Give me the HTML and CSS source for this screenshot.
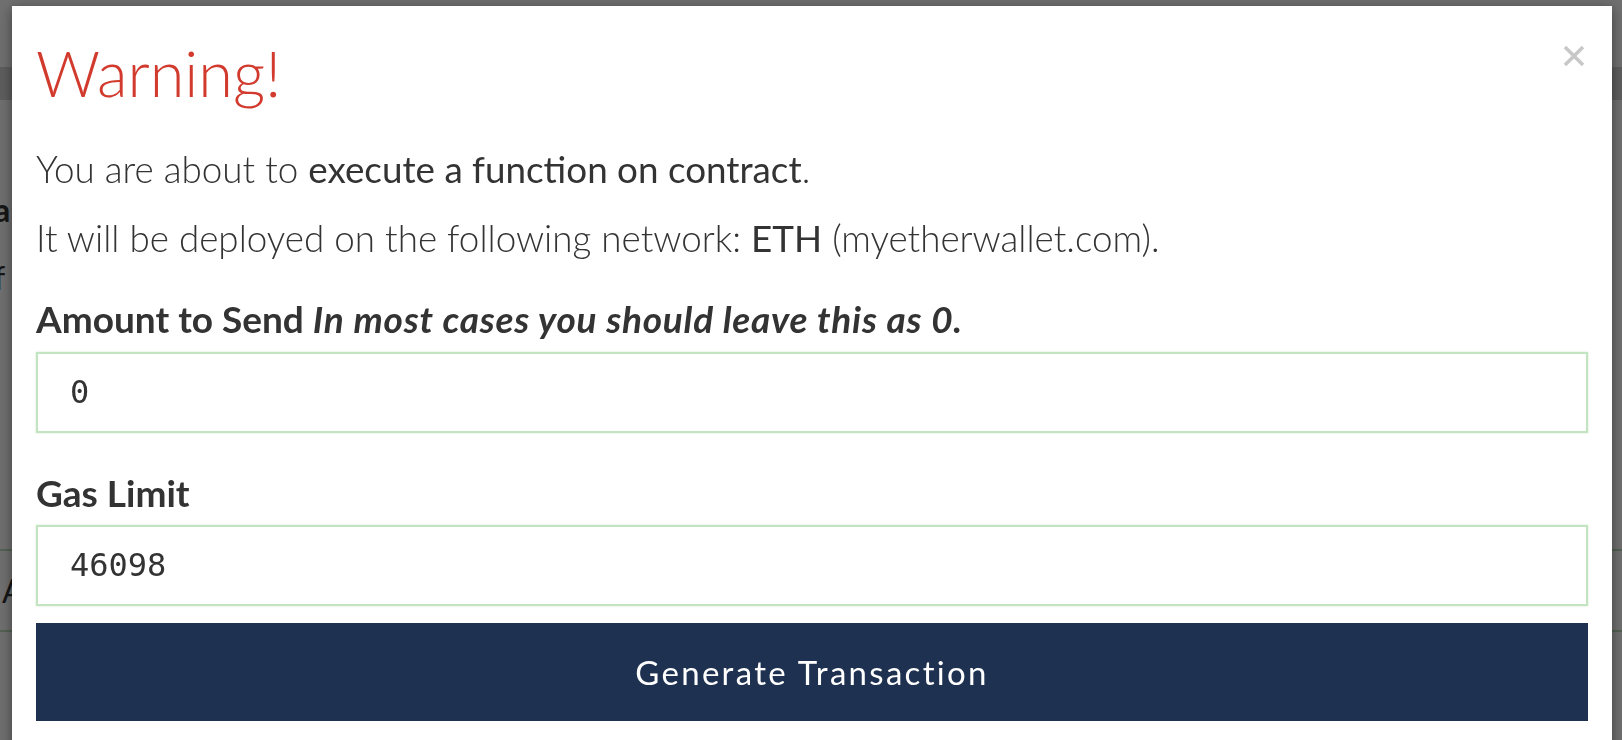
FILE: index.html
```html
<!DOCTYPE html>
<html>
<head>
<meta charset="utf-8">
<link rel="stylesheet" href="styles.css">
</head>
<body>
<div class="page">
  <div class="page-top"></div>
  <div class="page-band"></div>
  <div class="page-content">
    <p class="page-h">a</p>
    <p class="page-t">f</p>
    <div class="page-input">A</div>
  </div>
</div>
<div class="overlay">
  <div class="modal">
    <button class="close" aria-label="Close">
      <svg width="22" height="22" viewBox="0 0 22 22"><path d="M2 2 L20 20 M20 2 L2 20" stroke="#c8c8c8" stroke-width="3.6" fill="none"/></svg>
    </button>
    <h1 class="title">Warning!</h1>
    <p class="msg">You are about to <strong>execute a function on contract</strong>.</p>
    <p class="msg msg-2">It will be deployed on the following network: <strong>ETH</strong> (myetherwallet.com).</p>
    <label class="field-label label-1">Amount to Send <em>In most cases you should leave this as 0.</em></label>
    <div class="field">0</div>
    <label class="field-label label-2">Gas Limit</label>
    <div class="field">46098</div>
    <button class="btn">Generate Transaction</button>
  </div>
</div>
</body>
</html>
```
FILE: styles.css
```css
html, body {
  margin: 0;
  padding: 0;
}
body {
  background: #ffffff;
  font-family: Lato, "Open Sans", sans-serif;
  color: #333;
  width: 1622px;
  height: 740px;
  overflow: hidden;
}
.page-top {
  height: 67px;
}
.page-band {
  height: 33px;
  background: #d6d6d6;
}
.page-content {
  margin-left: -6px;
}
.page-h {
  margin: 0;
  padding-top: 90px;
  font-weight: 700;
  font-size: 32px;
  line-height: 40px;
  color: #333;
}
.page-t {
  margin: 0;
  padding-top: 28px;
  font-weight: 400;
  font-size: 32px;
  line-height: 40px;
  color: #333;
}
.page-input {
  margin-top: 251px;
  height: 79px;
  border-top: 2px solid #c2dfc0;
  border-bottom: 2px solid #c2dfc0;
  font-size: 32px;
  line-height: 79px;
  padding-left: 8px;
  color: #333;
}
.overlay {
  position: fixed;
  inset: 0;
  background: rgba(0, 0, 0, 0.565);
}
.modal {
  position: relative;
  margin: 6px 0 0 12px;
  width: 1600px;
  height: 760px;
  box-sizing: border-box;
  padding: 34px 24px 0 24px;
  background: #fff;
  box-shadow: 0 3px 12px rgba(0, 0, 0, 0.45);
}
.close {
  position: absolute;
  top: 39px;
  right: 27px;
  width: 22px;
  height: 22px;
  padding: 0;
  border: 0;
  background: none;
  display: flex;
}
.title {
  margin: 0;
  font-weight: 300;
  font-size: 63px;
  line-height: 66px;
  color: #d13a2d;
}
.msg {
  margin: 41px 0 0 0;
  font-weight: 300;
  font-size: 36.8px;
  line-height: 45px;
  color: #333;
}
.msg strong {
  font-weight: 400;
}
.msg-2 {
  margin-top: 24px;
}
.field-label {
  display: block;
  font-weight: 700;
  font-size: 37px;
  line-height: 45px;
  color: #333;
}
.field-label em {
  font-style: italic;
  letter-spacing: 0.75px;
}
.label-1 {
  margin-top: 35px;
  margin-bottom: 11px;
}
.label-2 {
  margin-top: 37px;
  margin-bottom: 10px;
}
.field {
  box-sizing: border-box;
  height: 81px;
  border: 2px solid #c3e4c1;
  box-shadow: 0 0 2px rgba(120, 190, 120, 0.35);
  padding-left: 32px;
  font-family: "DejaVu Sans Mono", monospace;
  font-size: 32px;
  line-height: 77px;
  color: #333;
}
.btn {
  display: block;
  margin-top: 17px;
  width: 100%;
  height: 98px;
  border: 0;
  background: #1e3150;
  color: #fff;
  font-family: Lato, sans-serif;
  font-weight: 400;
  font-size: 33px;
  letter-spacing: 2.3px;
}
```
